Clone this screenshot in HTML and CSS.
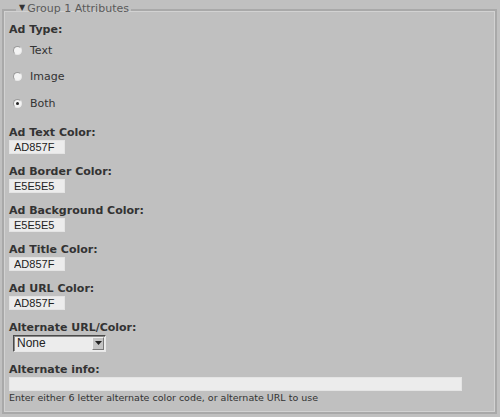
FILE: index.html
```html
<!DOCTYPE html>
<html>
<head>
<meta charset="utf-8">
<link rel="stylesheet" href="styles.css">
</head>
<body>
<form class="form">
  <fieldset class="group">
    <legend class="group-title"><span class="caret">&#9660;</span>Group 1 Attributes</legend>

    <div class="label type-label">Ad Type:</div>
    <div class="radios">
      <label class="radio-row"><input type="radio" name="adtype" class="radio"> Text</label>
      <label class="radio-row"><input type="radio" name="adtype" class="radio"> Image</label>
      <label class="radio-row"><input type="radio" name="adtype" class="radio" checked> Both</label>
    </div>

    <div class="field">
      <div class="label">Ad Text Color:</div>
      <input class="text-input short" type="text" value="AD857F">
    </div>
    <div class="field">
      <div class="label">Ad Border Color:</div>
      <input class="text-input short" type="text" value="E5E5E5">
    </div>
    <div class="field">
      <div class="label">Ad Background Color:</div>
      <input class="text-input short" type="text" value="E5E5E5">
    </div>
    <div class="field">
      <div class="label">Ad Title Color:</div>
      <input class="text-input short" type="text" value="AD857F">
    </div>
    <div class="field">
      <div class="label">Ad URL Color:</div>
      <input class="text-input short" type="text" value="AD857F">
    </div>
    <div class="field select-field">
      <div class="label">Alternate URL/Color:</div>
      <div class="select-box">
        <select class="select"><option>None</option></select>
        <span class="select-arrow"><svg width="7" height="4" viewBox="0 0 7 4"><path d="M0 0h7L3.5 4z" fill="#222"/></svg></span>
      </div>
    </div>
    <div class="field last">
      <div class="label">Alternate info:</div>
      <input class="text-input long" type="text" value="">
      <div class="help">Enter either 6 letter alternate color code, or alternate URL to use</div>
    </div>
  </fieldset>
</form>
</body>
</html>
```

FILE: styles.css
```css
html, body {
  margin: 0;
  padding: 0;
  background: #c0c0c0;
}
body {
  font-family: "DejaVu Sans", Verdana, sans-serif;
  color: #333;
  width: 500px;
  height: 417px;
  overflow: hidden;
}
.form {
  margin: 0;
  padding: 0;
  padding-top: 2px;
}
.group {
  margin: 0 3px 0 2px;
  padding: 0 5px 8px 5px;
  border: 2px solid #a9a9a9;
  box-shadow: inset 0 0 0 1px #d2d2d2;
}
.group-title {
  margin-left: 7px;
  padding: 0 2px 0 3px;
  font-size: 11px;
  line-height: 14px;
  color: #5a5a5a;
}
.caret {
  font-size: 8px;
  margin-right: 2px;
  position: relative;
  top: -2px;
  color: #333;
}
.label {
  font-weight: bold;
  font-size: 11px;
  line-height: 15px;
  color: #333;
}
.type-label {
  margin-top: 5px;
}
.radios {
  margin-bottom: 8px;
}
.radio-row {
  display: flex;
  align-items: center;
  height: 26.5px;
  font-size: 11px;
  color: #333;
  gap: 8px;
  padding-left: 4px;
}
.radio {
  appearance: none;
  -webkit-appearance: none;
  margin: 0;
  width: 9px;
  height: 9px;
  border-radius: 50%;
  background: #f4f4f4;
  border: 1px solid #9a9a9a;
  border-right-color: #e8e8e8;
  border-bottom-color: #e8e8e8;
  box-sizing: border-box;
  display: grid;
  place-items: center;
}
.radio:checked::after {
  content: "";
  width: 3px;
  height: 3px;
  border-radius: 50%;
  background: #222;
}
.field {
  margin-bottom: 10px;
}
.field.last {
  margin-bottom: 0;
}
.text-input {
  display: block;
  margin: 0;
  height: 14px;
  box-sizing: border-box;
  border: 1px solid #e4e4e4;
  background: #ececec;
  font-family: "Liberation Sans", Arial, sans-serif;
  font-size: 11px;
  color: #222;
  padding: 0 0 0 4px;
  outline: none;
}
.text-input.short {
  width: 56px;
}
.text-input.long {
  width: 453px;
}
.select-box {
  display: flex;
  align-items: center;
  margin-left: 4px;
  width: 93px;
  height: 17px;
  box-sizing: border-box;
  background: #ececec;
  border: 1px solid #e8e8e8;
  border-top-color: #4a4a4a;
  border-left-color: #4a4a4a;
  box-shadow: inset 1px 1px 0 #8a8a8a;
}
.select {
  appearance: none;
  -webkit-appearance: none;
  flex: 1;
  min-width: 0;
  border: none;
  background: transparent;
  font-family: "Liberation Sans", Arial, sans-serif;
  font-size: 12px;
  color: #222;
  padding: 0 0 0 3px;
  margin: 0;
  height: 15px;
  outline: none;
}
.select-arrow {
  width: 12px;
  height: 13px;
  margin-right: 1px;
  box-sizing: border-box;
  background: #c4c4c4;
  border: 1px solid #7a7a7a;
  border-top-color: #f0f0f0;
  border-left-color: #f0f0f0;
  display: flex;
  align-items: center;
  justify-content: center;
}
.help {
  font-size: 9.5px;
  line-height: 13px;
  color: #333;
}
```
